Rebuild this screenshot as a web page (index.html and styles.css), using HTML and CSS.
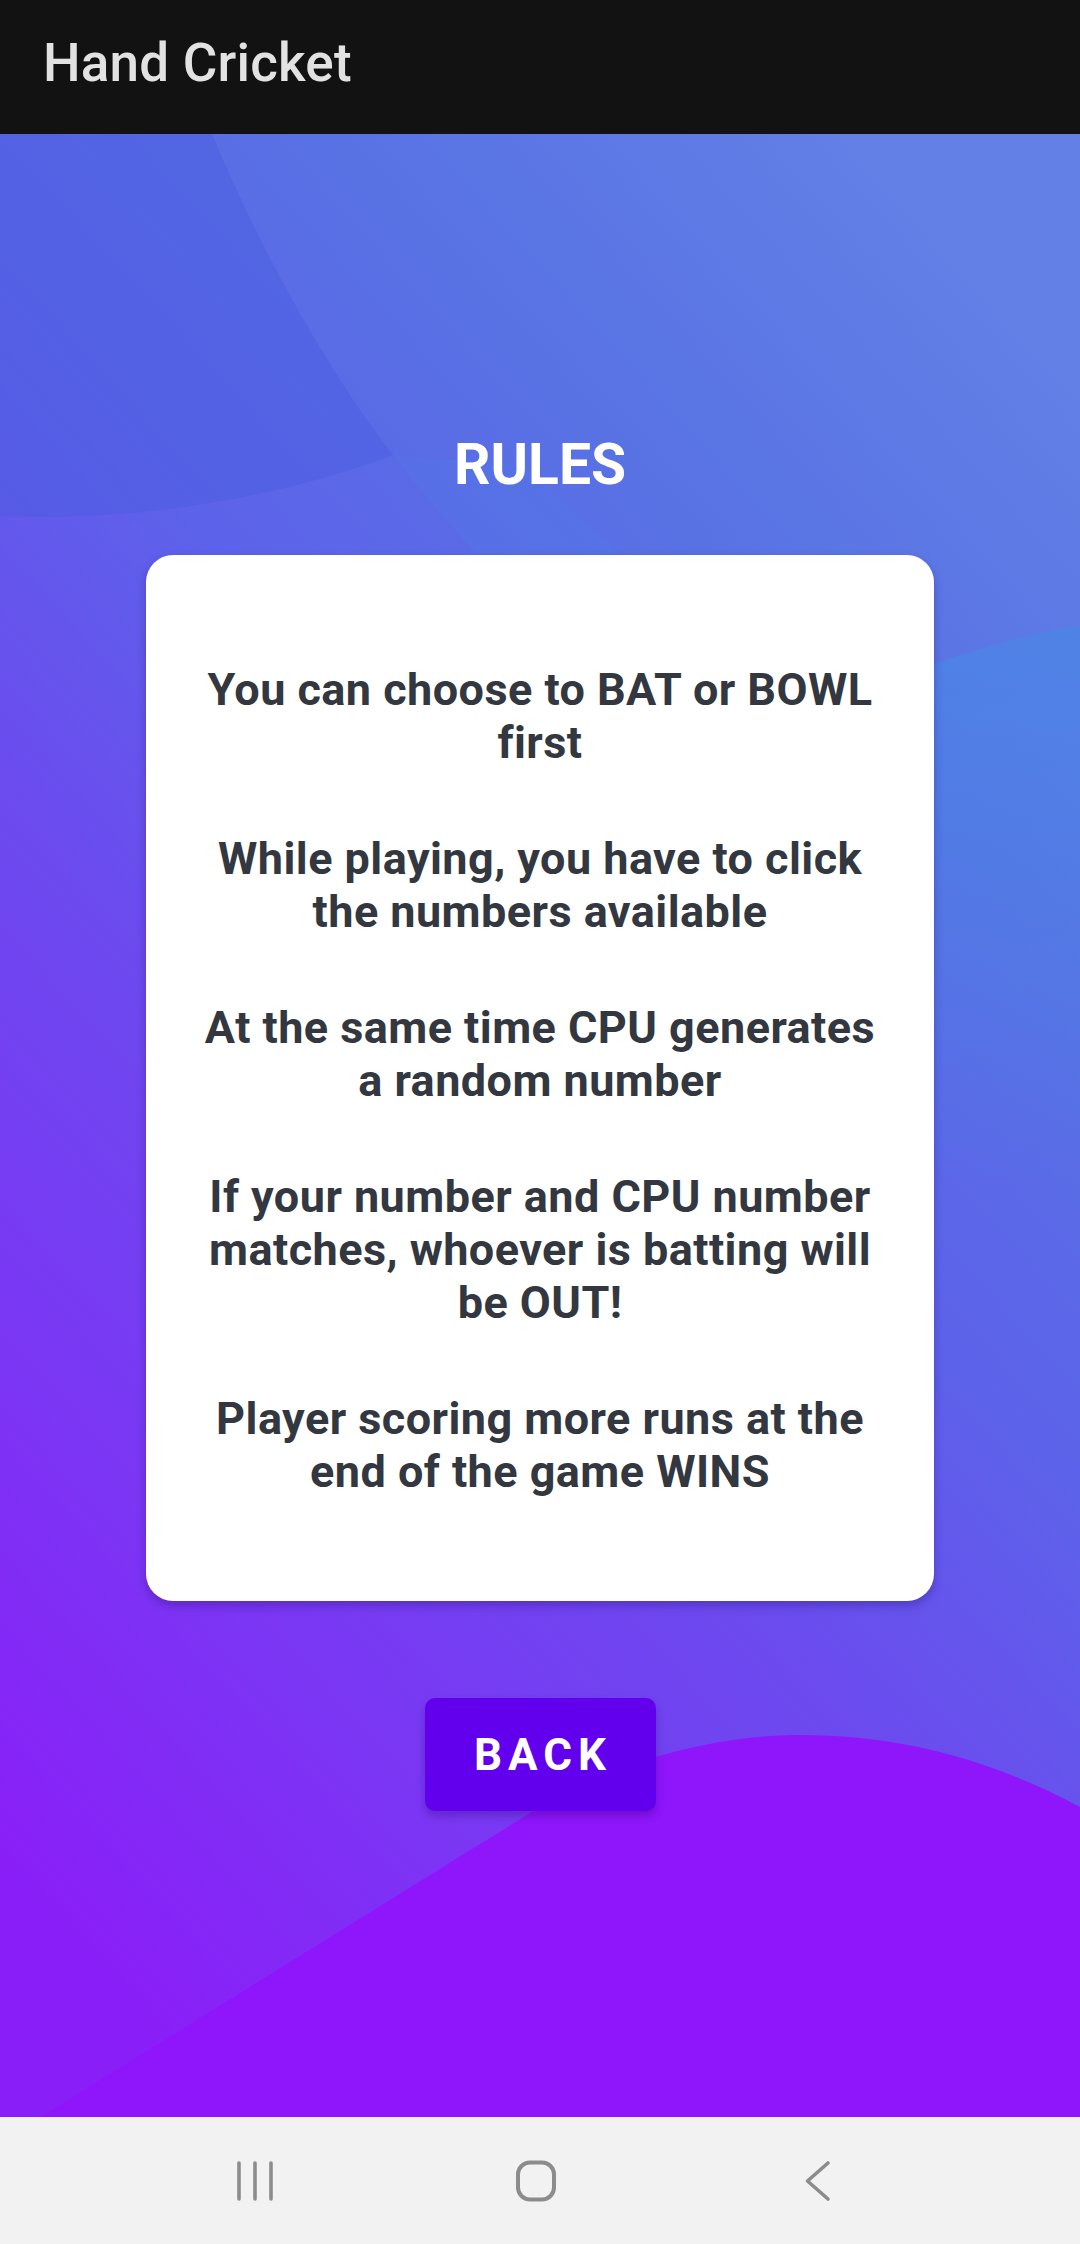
FILE: index.html
```html
<!DOCTYPE html>
<html lang="en">
<head>
<meta charset="utf-8">
<title>Hand Cricket</title>
<link rel="stylesheet" href="styles.css">
</head>
<body>
<div class="screen">
  <header class="appbar">
    <h1 class="appbar-title">Hand Cricket</h1>
  </header>
  <main class="main">
    <svg class="main-bg" viewBox="0 0 1080 1983" preserveAspectRatio="none" aria-hidden="true">
      <defs>
        <linearGradient id="base" x1="0.8" y1="0" x2="0.2" y2="1">
          <stop offset="0" stop-color="#6280e6"/>
          <stop offset="0.22" stop-color="#5872e4"/>
          <stop offset="0.42" stop-color="#5d62ea"/>
          <stop offset="0.6" stop-color="#6c4aef"/>
          <stop offset="0.8" stop-color="#7b36f4"/>
          <stop offset="1" stop-color="#8a1ef8"/>
        </linearGradient>
        <linearGradient id="rightCircle" gradientUnits="userSpaceOnUse" x1="0" y1="490" x2="0" y2="1050">
          <stop offset="0" stop-color="#4986e6" stop-opacity="0.7"/>
          <stop offset="1" stop-color="#4986e6" stop-opacity="0"/>
        </linearGradient>
      </defs>
      <rect x="0" y="0" width="1080" height="1983" fill="url(#base)"/>
      <path d="M0,0 L212,0 C262,120 330,240 393,321 C270,368 120,388 0,382 Z" fill="#4a5ddf" fill-opacity="0.45"/>
      <path d="M393,321 C430,370 460,400 500,450 L620,420 L520,330 Z" fill="#4e7fe6" fill-opacity="0.22"/>
      <circle cx="1250" cy="1428" r="952" fill="url(#rightCircle)"/>
      <path d="M41,1983 L530,1679 C590,1638 700,1601 800,1601 C900,1601 990,1625 1080,1673 L1080,1983 Z" fill="#8f15fb"/>
    </svg>
    <div class="content">
      <h2 class="rules-title">RULES</h2>
      <section class="card">
        <p class="rule">You can choose to BAT or BOWL<br>first</p>
        <p class="rule">While playing, you have to click<br>the numbers available</p>
        <p class="rule">At the same time CPU generates<br>a random number</p>
        <p class="rule">If your number and CPU number<br>matches, whoever is batting will<br>be OUT!</p>
        <p class="rule">Player scoring more runs at the<br>end of the game WINS</p>
      </section>
      <button class="back-btn" type="button">BACK</button>
    </div>
  </main>
  <nav class="navbar">
    <span class="nav-icon">
      <svg viewBox="0 0 60 60" width="60" height="60"><g stroke="#8c8c8c" stroke-width="3.6" stroke-linecap="round" fill="none"><line x1="14" y1="12" x2="14" y2="48"/><line x1="30" y1="12" x2="30" y2="48"/><line x1="46" y1="12" x2="46" y2="48"/></g></svg>
    </span>
    <span class="nav-icon">
      <svg viewBox="0 0 60 60" width="60" height="60"><rect x="12" y="11.5" width="36" height="37" rx="12" ry="12" stroke="#8c8c8c" stroke-width="4" fill="none"/></svg>
    </span>
    <span class="nav-icon">
      <svg viewBox="0 0 60 60" width="60" height="60"><polyline points="41,12 20.5,30 41,48" stroke="#8c8c8c" stroke-width="3.6" stroke-linecap="round" stroke-linejoin="round" fill="none"/></svg>
    </span>
  </nav>
</div>
</body>
</html>
```

FILE: styles.css
```css
* { box-sizing: border-box; }

html, body {
  margin: 0;
  padding: 0;
  width: 1080px;
  height: 2244px;
  overflow: hidden;
  font-family: Roboto, "Liberation Sans", Arial, sans-serif;
}

.screen {
  display: flex;
  flex-direction: column;
  width: 1080px;
  height: 2244px;
}

.appbar {
  height: 134px;
  flex: 0 0 134px;
  background: #121212;
  display: flex;
  align-items: center;
  padding: 0 0 8px 43px;
}

.appbar-title {
  margin: 0;
  font-size: 53px;
  font-weight: 500;
  color: #e2e2e2;
  letter-spacing: 0.2px;
}

.main {
  flex: 0 0 1983px;
  height: 1983px;
  display: grid;
  grid-template: 1fr / 1fr;
  overflow: hidden;
}

.main-bg {
  grid-area: 1 / 1;
  width: 1080px;
  height: 1983px;
  display: block;
}

.content {
  grid-area: 1 / 1;
  display: flex;
  flex-direction: column;
  align-items: center;
  padding-top: 297px;
}

.rules-title {
  margin: 0;
  height: 68px;
  line-height: 68px;
  font-size: 57px;
  font-weight: 700;
  color: #ffffff;
}

.card {
  margin-top: 56px;
  width: 788px;
  background: #ffffff;
  border-radius: 27px;
  padding: 108px 20px 103px;
  box-shadow: 0 5px 10px rgba(40, 20, 120, 0.35);
  display: flex;
  flex-direction: column;
  gap: 63px;
}

.rule {
  margin: 0;
  text-align: center;
  font-size: 45px;
  line-height: 53px;
  font-weight: 700;
  letter-spacing: 0.45px;
  color: #33373f;
  white-space: nowrap;
}

.back-btn {
  margin-top: 97px;
  width: 231px;
  height: 113px;
  border: none;
  border-radius: 10px;
  background: #6200ee;
  color: #ffffff;
  font-family: Roboto, "Liberation Sans", Arial, sans-serif;
  font-size: 44px;
  font-weight: 700;
  letter-spacing: 6px;
  padding: 0 0 0 6px;
  box-shadow: 0 5px 8px rgba(40, 0, 110, 0.3);
}

.navbar {
  flex: 0 0 127px;
  height: 127px;
  background: #f2f2f2;
  display: flex;
  justify-content: center;
  align-items: center;
  gap: 221px;
  padding-right: 8px;
}

.nav-icon {
  width: 60px;
  height: 60px;
  display: block;
}

.nav-icon svg { display: block; }
```
